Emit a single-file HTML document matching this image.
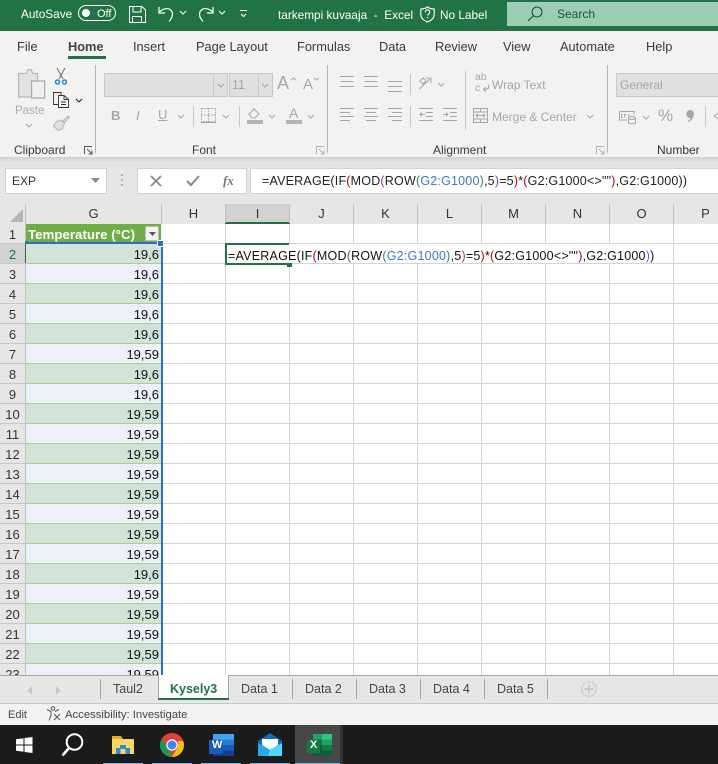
<!DOCTYPE html>
<html><head><meta charset="utf-8"><style>
html,body{margin:0;padding:0}
body{width:718px;height:764px;overflow:hidden;position:relative;background:#fff;font-family:"Liberation Sans",sans-serif}
div,span.a{position:absolute}
svg{position:absolute;overflow:visible}
.t{position:absolute;white-space:nowrap;line-height:16px;height:16px}
.w{color:#fff;font-size:11.8px}
.tab{font-size:12.8px;color:#3b3a39;top:39px}
.d{color:#a6a6a6;font-size:12px}
.lbl{font-size:12px;color:#3b3a39;top:142px}
.ch{top:204px;height:20px;line-height:20px;text-align:center;font-size:13px;color:#333;background:#e6e6e6}
.rn{left:0;width:25px;height:19px;line-height:21px;text-align:center;font-size:13px;color:#333;background:#e6e6e6}
.v{left:26px;width:133px;height:19px;line-height:21px;text-align:right;font-size:13px;color:#111;padding-right:2px;white-space:nowrap}
.a1{background:#d4e3d8}.a2{background:#ebf0f9}
.hl{left:26px;width:135px;height:1px;background:#a9d08e}
.gl{left:162px;width:556px;height:1px;background:#d4d4d4}
.vl{top:224px;width:1px;height:451px;background:#d4d4d4}
.sh{top:681px;font-size:12.5px;color:#444}
.sep{top:679px;width:1px;height:20px;background:#a6a6a6}
.r{color:#c00000}.p{color:#7f3f98}.g{color:#2e8b57}.b{color:#3f78c8}
</style></head><body>

<!-- title bar -->
<div style="left:0;top:0;width:718px;height:31px;background:#217346"></div>
<div style="left:507px;top:2px;width:211px;height:24px;background:#9fcdb3"></div>
<span class="t w" style="left:21px;top:6px;font-size:11.8px">AutoSave</span>
<div style="left:78px;top:5px;width:36px;height:14px;border:1px solid #fff;border-radius:8px"></div>
<div style="left:82px;top:9px;width:8px;height:8px;background:#fff;border-radius:50%"></div>
<span class="t w" style="left:97px;top:6px;font-size:11px">Off</span>
<svg style="left:129px;top:6px" width="17" height="17" fill="none" stroke="#fff" stroke-width="1"><path d="M.5.5H13l3.5 3.5v12.500H.5zM4 .5v5.500h8V.5M3.500 16.500V10.500h9v6"/></svg>
<svg style="left:158px;top:6px" width="17" height="18" fill="none" stroke="#fff" stroke-width="1.200"><path d="M1 1v6h6M1 6.500C4 3 9 1.500 12 3.500c3.500 2.500 3.500 7-1 12"/></svg>
<svg style="left:179px;top:10px" width="8" height="5" fill="none" stroke="#fff"><path d="M1 1l3 3 3-3"/></svg>
<svg style="left:197px;top:6px" width="17" height="18" fill="none" stroke="#fff" stroke-width="1.200"><path d="M16 1v6h-6M16 6.500C13 3 8 1.500 5 3.500c-3.500 2.500-3.500 7 1 12"/></svg>
<svg style="left:218px;top:10px" width="8" height="5" fill="none" stroke="#fff"><path d="M1 1l3 3 3-3"/></svg>
<svg style="left:240px;top:10px" width="8" height="8" fill="none" stroke="#fff"><path d="M0 .5h7M1 4l2.500 2.500L6 4"/></svg>
<span class="t w" style="left:278px;top:7px">tarkempi kuvaaja&nbsp; -&nbsp; Excel</span>
<svg style="left:420px;top:6px" width="15" height="17" fill="none" stroke="#fff" stroke-width="1.100"><path d="M7.500.8C6 2.300 3 3 .8 3v5.500c0 3.500 3 6 6.700 7.500 3.700-1.500 6.700-4 6.700-7.500V3C12 3 9 2.300 7.500.8z"/><path d="M5.300 6.200c0-3 4.500-3 4.500 0 0 1.500-2.200 1.700-2.200 3.300M7.600 11v1.200"/></svg>
<span class="t w" style="left:440px;top:7px">No Label</span>
<svg style="left:527px;top:6px" width="16" height="16" fill="none" stroke="#17553a" stroke-width="1.100"><circle cx="10" cy="6" r="5"/><path d="M6.300 9.700L1 15"/></svg>
<span class="t" style="left:557px;top:6px;font-size:12px;color:#17553a">Search</span>

<!-- ribbon -->
<div style="left:0;top:31px;width:718px;height:126px;background:#f3f2f1"></div>
<div style="left:0;top:157px;width:718px;height:47px;background:#e6e6e6"></div>
<div style="left:0;top:157px;width:718px;height:5px;background:linear-gradient(#cfcfcf,#e6e6e6)"></div>
<span class="t tab" style="left:17px">File</span>
<span class="t tab" style="left:68px;font-weight:bold;color:#444;font-size:12.800px">Home</span>
<div style="left:68px;top:56px;width:38px;height:3px;background:#217346"></div>
<span class="t tab" style="left:133px">Insert</span>
<span class="t tab" style="left:196px">Page Layout</span>
<span class="t tab" style="left:297px">Formulas</span>
<span class="t tab" style="left:379px">Data</span>
<span class="t tab" style="left:435px">Review</span>
<span class="t tab" style="left:503px">View</span>
<span class="t tab" style="left:560px">Automate</span>
<span class="t tab" style="left:646px">Help</span>

<!-- group separators -->
<div style="left:95px;top:65px;width:1px;height:88px;background:#b5b5b5"></div>
<div style="left:327px;top:65px;width:1px;height:88px;background:#b5b5b5"></div>
<div style="left:607px;top:65px;width:1px;height:88px;background:#b5b5b5"></div>

<!-- clipboard -->
<svg style="left:18px;top:69px" width="28" height="31" fill="#e3e3e3" stroke="#b8b8b8" stroke-width="1.200"><path d="M.6 4.500H8L10 .6h3l2 3.900h4.500V28H.6z"/><rect x="13.600" y="12" width="13" height="17" fill="#f0f0f0" stroke="#a8a8a8"/></svg>
<span class="t d" style="left:15px;top:103px;font-size:11.500px;color:#adadad">Paste</span>
<svg style="left:25px;top:123px" width="8" height="5" fill="none" stroke="#a6a6a6"><path d="M1 1l3 3 3-3"/></svg>
<svg style="left:55px;top:68px" width="12" height="17" fill="none" stroke="#666" stroke-width=".9"><path d="M2 0l6 11M10 0L4 11"/><circle cx="2.500" cy="14" r="2" stroke="#2b88d8" stroke-width="1.500"/><circle cx="9.500" cy="14" r="2" stroke="#2b88d8" stroke-width="1.500"/></svg>
<svg style="left:53px;top:92px" width="17" height="16" fill="#f3f2f1" stroke="#333" stroke-width=".9"><path d="M.5.500H8v12H.5z"/><path d="M5.500 3.500H11l4.500 4v8h-10z"/><path d="M11 3.500v4h4.500M8 10h5M8 12.500h5" fill="none"/></svg>
<svg style="left:75px;top:98px" width="8" height="5" fill="none" stroke="#222"><path d="M1 1l3 3 3-3"/></svg>
<svg style="left:53px;top:115px" width="17" height="16" fill="#e0e0e0" stroke="#b5b5b5"><path d="M10 6l5-5 1.500 1.500-5 5zM3 7l5-2 3.500 3.500L9 14l-4 1.500L.5 11z"/></svg>
<span class="t lbl" style="left:14px">Clipboard</span>
<svg style="left:84px;top:146px" width="9" height="9" fill="none" stroke="#555"><path d="M.5 8V.5H8M3 3l5 5M8 4.500V8H4.500"/></svg>

<!-- font -->
<div style="left:104px;top:73px;width:122px;height:22px;background:#e1e0df;border:1px solid #c8c8c8"></div>
<div style="left:213px;top:74px;width:1px;height:22px;background:#c8c8c8"></div>
<svg style="left:217px;top:83px" width="8" height="5" fill="none" stroke="#a6a6a6"><path d="M1 1l3 3 3-3"/></svg>
<div style="left:229px;top:73px;width:42px;height:22px;background:#e1e0df;border:1px solid #c8c8c8"></div>
<div style="left:258px;top:74px;width:1px;height:22px;background:#c8c8c8"></div>
<svg style="left:261px;top:83px" width="8" height="5" fill="none" stroke="#a6a6a6"><path d="M1 1l3 3 3-3"/></svg>
<span class="t d" style="left:232px;top:77px;font-size:12.500px">11</span>
<span class="t" style="left:277px;top:75px;font-size:18px;color:#a6a6a6">A</span>
<svg style="left:290px;top:77px" width="7" height="4" fill="none" stroke="#a6a6a6"><path d="M1 3l2.500-2L6 3"/></svg>
<span class="t" style="left:303px;top:77px;font-size:15px;color:#a6a6a6">A</span>
<svg style="left:313px;top:77px" width="7" height="4" fill="none" stroke="#a6a6a6"><path d="M1 1l2.500 2L6 1"/></svg>
<span class="t" style="left:111px;top:108px;font-size:13px;font-weight:bold;color:#a6a6a6">B</span>
<span class="t" style="left:136px;top:108px;font-size:13px;font-style:italic;color:#a6a6a6">I</span>
<span class="t" style="left:158px;top:107px;font-size:13px;color:#a6a6a6;text-decoration:underline">U</span>
<svg style="left:177px;top:114px" width="8" height="5" fill="none" stroke="#a6a6a6"><path d="M1 1l3 3 3-3"/></svg>
<div style="left:193px;top:106px;width:1px;height:21px;background:#c8c8c8"></div>
<svg style="left:201px;top:108px" width="15" height="15" fill="none" stroke="#a6a6a6" stroke-dasharray="1.500 1"><rect x=".5" y=".5" width="14" height="13"/><path d="M7.500 0v14M0 7h15"/><path d="M0 14.500h15" stroke-dasharray="none"/></svg>
<svg style="left:222px;top:114px" width="8" height="5" fill="none" stroke="#a6a6a6"><path d="M1 1l3 3 3-3"/></svg>
<div style="left:239px;top:106px;width:1px;height:21px;background:#c8c8c8"></div>
<svg style="left:248px;top:108px" width="14" height="12" fill="none" stroke="#a6a6a6"><path d="M1 6l5-5 5 5-4 4H4zM6 1V0"/></svg>
<div style="left:247px;top:120px;width:16px;height:4px;background:#b3b3b3"></div>
<svg style="left:268px;top:114px" width="8" height="5" fill="none" stroke="#a6a6a6"><path d="M1 1l3 3 3-3"/></svg>
<span class="t" style="left:289px;top:105px;font-size:14px;color:#a6a6a6">A</span>
<div style="left:286px;top:120px;width:16px;height:4px;background:#b3b3b3"></div>
<svg style="left:307px;top:114px" width="8" height="5" fill="none" stroke="#a6a6a6"><path d="M1 1l3 3 3-3"/></svg>
<span class="t lbl" style="left:192px">Font</span>
<svg style="left:316px;top:146px" width="9" height="9" fill="none" stroke="#b5b5b5"><path d="M.5 8V.5H8M3 3l5 5M8 4.500V8H4.500"/></svg>

<!-- alignment -->
<svg style="left:340px;top:76px" width="48" height="17" stroke="#a6a6a6"><path d="M0 .5h14M1 5.500h12M0 10.500h14M24 .5h14M25 5.500h12M24 10.500h14"/></svg>
<svg style="left:388px;top:81px" width="14" height="12" stroke="#a6a6a6"><path d="M0 .5h14M0 5.500h14M0 10.500h14"/></svg>
<div style="left:410px;top:74px;width:1px;height:21px;background:#c8c8c8"></div>
<svg style="left:418px;top:76px" width="18" height="15" fill="none" stroke="#a6a6a6"><path d="M1 13L12 3M8 2h5v5M2 5l3-3 3 3-3 3z"/></svg>
<svg style="left:437px;top:82px" width="8" height="5" fill="none" stroke="#a6a6a6"><path d="M1 1l3 3 3-3"/></svg>
<div style="left:465px;top:71px;width:1px;height:59px;background:#c8c8c8"></div>
<span class="t d" style="left:475px;top:72px;font-size:10.500px;line-height:10px">ab</span>
<span class="t d" style="left:475px;top:83px;font-size:10.500px;line-height:10px">c</span>
<svg style="left:481px;top:84px" width="9" height="9" fill="none" stroke="#a6a6a6"><path d="M7 .5c2 3 0 5-4 5M5 3L2.500 5.500 5 8"/></svg>
<span class="t d" style="left:492px;top:77px;font-size:12px">Wrap Text</span>
<svg style="left:340px;top:108px" width="14" height="14" stroke="#a6a6a6"><path d="M0 .5h14M0 4.500h10M0 8.500h14M0 12.500h10"/></svg>
<svg style="left:364px;top:108px" width="14" height="14" stroke="#a6a6a6"><path d="M0 .5h14M2 4.500h10M0 8.500h14M2 12.500h10"/></svg>
<svg style="left:388px;top:108px" width="14" height="14" stroke="#a6a6a6"><path d="M0 .5h14M4 4.500h10M0 8.500h14M4 12.500h10"/></svg>
<div style="left:410px;top:106px;width:1px;height:21px;background:#c8c8c8"></div>
<svg style="left:419px;top:108px" width="15" height="14" fill="none" stroke="#a6a6a6"><path d="M0 .5h14M7 4.500h7M7 8.500h7M0 12.500h14M6 6.500H1M3 4.500l-2 2 2 2"/></svg>
<svg style="left:443px;top:108px" width="15" height="14" fill="none" stroke="#a6a6a6"><path d="M0 .5h14M7 4.500h7M7 8.500h7M0 12.500h14M0 6.500h5M3 4.500l2 2-2 2"/></svg>
<svg style="left:473px;top:108px" width="15" height="15" fill="none" stroke="#a6a6a6"><rect x=".5" y=".5" width="14" height="14"/><path d="M0 4h15M0 11h15M7.500 0v4M7.500 11v4M3 7.500h9M5 5.500l-2 2 2 2M10 5.500l2 2-2 2"/></svg>
<span class="t d" style="left:492px;top:109px;font-size:12px">Merge &amp; Center</span>
<svg style="left:586px;top:114px" width="8" height="5" fill="none" stroke="#a6a6a6"><path d="M1 1l3 3 3-3"/></svg>
<span class="t lbl" style="left:433px">Alignment</span>
<svg style="left:596px;top:146px" width="9" height="9" fill="none" stroke="#b5b5b5"><path d="M.5 8V.5H8M3 3l5 5M8 4.500V8H4.500"/></svg>

<!-- number -->
<div style="left:616px;top:73px;width:102px;height:22px;background:#e1e0df;border:1px solid #c8c8c8;border-right:0"></div>
<span class="t d" style="left:620px;top:77px;font-size:12px">General</span>
<svg style="left:619px;top:111px" width="17" height="13" fill="none" stroke="#a6a6a6"><path d="M.5.500H15v3M.5.500V9H8"/><path d="M4 3.500H2.500v3H4M7 3.500H5.500v3M10 3.500v3"/><ellipse cx="13" cy="7" rx="3.500" ry="1.500"/><path d="M9.500 7v5c1 1 6 1 7 0V7"/></svg>
<svg style="left:642px;top:115px" width="8" height="5" fill="none" stroke="#a6a6a6"><path d="M1 1l3 3 3-3"/></svg>
<span class="t" style="left:658px;top:108px;font-size:17px;color:#a6a6a6">%</span>
<svg style="left:686px;top:110px" width="8" height="12" fill="#a6a6a6"><path d="M4 0a4 4 0 0 1 4 4c0 3.500-2.500 6.500-5.500 8L2 11c1.500-1 2.500-2.500 2.700-3A4 4 0 1 1 4 0z"/></svg>
<div style="left:705px;top:106px;width:1px;height:21px;background:#c8c8c8"></div>
<svg style="left:713px;top:108px" width="5" height="14" fill="none" stroke="#a6a6a6"><path d="M5 5L1 8l4 3"/></svg>
<span class="t lbl" style="left:657px;color:#333">Number</span>

<!-- name box + formula bar -->
<div style="left:5px;top:168px;width:100px;height:24px;background:#fff;border:1px solid #d2d2d2"></div>
<span class="t" style="left:12px;top:173px;font-size:12px;color:#333">EXP</span>
<svg style="left:91px;top:178px" width="9" height="5" fill="#8a8a8a"><path d="M0 0h9L4.500 5z"/></svg>
<svg style="left:121px;top:174px" width="3" height="15" fill="#b4b4b4"><rect y="0" width="2" height="2"/><rect y="5" width="2" height="2"/><rect y="10" width="2" height="2"/></svg>
<div style="left:137px;top:168px;width:108px;height:24px;background:#fff;border:1px solid #d2d2d2"></div>
<svg style="left:150px;top:175px" width="12" height="12" fill="none" stroke="#8a8a8a" stroke-width="1.800"><path d="M1 1l10 10M11 1L1 11"/></svg>
<svg style="left:186px;top:175px" width="14" height="12" fill="none" stroke="#8a8a8a" stroke-width="2"><path d="M1 6l4 4L13 1"/></svg>
<span class="t" style="left:223px;top:173px;font-size:13px;font-style:italic;font-weight:bold;color:#777;font-family:'Liberation Serif',serif">fx</span>
<div style="left:250px;top:168px;width:468px;height:24px;background:#fff;border:1px solid #d2d2d2;border-right:0"></div>
<span class="t" style="left:262px;top:173px;font-size:12.500px;color:#222;letter-spacing:.2px">=AVERAGE(IF<span class="r">(</span>MOD<span class="p">(</span>ROW<span class="g">(</span><span class="b">G2:G1000</span><span class="g">)</span>,5<span class="p">)</span>=5<span class="r">)</span>*<span class="r">(</span>G2:G1000&lt;&gt;""<span class="r">)</span>,G2:G1000))</span>

<!-- column headers -->
<div class="ch" style="left:0;width:25px"></div>
<svg style="left:10px;top:209px" width="13" height="13" fill="#b5b5b5"><path d="M13 0v13H0z"/></svg>
<div class="ch" style="left:26px;width:135px;line-height:20px">G</div>
<div class="ch" style="left:162px;width:63px">H</div>
<div class="ch" style="left:226px;width:63px;background:#d2d2d2;height:18px;line-height:19px">I</div>
<div style="left:225px;top:222px;width:65px;height:2px;background:#217346"></div>
<div class="ch" style="left:290px;width:63px">J</div>
<div class="ch" style="left:354px;width:63px">K</div>
<div class="ch" style="left:418px;width:63px">L</div>
<div class="ch" style="left:482px;width:63px">M</div>
<div class="ch" style="left:546px;width:63px">N</div>
<div class="ch" style="left:610px;width:63px">O</div>
<div class="ch" style="left:674px;width:63px">P</div>
<div style="left:25px;top:204px;width:1px;height:20px;background:#c0c0c0"></div>
<div style="left:161px;top:204px;width:1px;height:20px;background:#c0c0c0"></div>
<div style="left:225px;top:204px;width:1px;height:19px;background:#c0c0c0"></div>
<div style="left:289px;top:204px;width:1px;height:19px;background:#c0c0c0"></div>
<div style="left:353px;top:204px;width:1px;height:20px;background:#c0c0c0"></div>
<div style="left:417px;top:204px;width:1px;height:20px;background:#c0c0c0"></div>
<div style="left:481px;top:204px;width:1px;height:20px;background:#c0c0c0"></div>
<div style="left:545px;top:204px;width:1px;height:20px;background:#c0c0c0"></div>
<div style="left:609px;top:204px;width:1px;height:20px;background:#c0c0c0"></div>
<div style="left:673px;top:204px;width:1px;height:20px;background:#c0c0c0"></div>

<!-- grid lines -->
<div class="vl" style="left:225px"></div><div class="vl" style="left:289px"></div><div class="vl" style="left:353px"></div><div class="vl" style="left:417px"></div><div class="vl" style="left:481px"></div><div class="vl" style="left:545px"></div><div class="vl" style="left:609px"></div><div class="vl" style="left:673px"></div>
<div class="gl" style="top:243px"></div><div class="gl" style="top:263px"></div><div class="gl" style="top:283px"></div><div class="gl" style="top:303px"></div><div class="gl" style="top:323px"></div><div class="gl" style="top:343px"></div><div class="gl" style="top:363px"></div><div class="gl" style="top:383px"></div><div class="gl" style="top:403px"></div><div class="gl" style="top:423px"></div><div class="gl" style="top:443px"></div><div class="gl" style="top:463px"></div><div class="gl" style="top:483px"></div><div class="gl" style="top:503px"></div><div class="gl" style="top:523px"></div><div class="gl" style="top:543px"></div><div class="gl" style="top:563px"></div><div class="gl" style="top:583px"></div><div class="gl" style="top:603px"></div><div class="gl" style="top:623px"></div><div class="gl" style="top:643px"></div><div class="gl" style="top:663px"></div>
<div style="left:25px;top:224px;width:1px;height:451px;background:#c0c0c0"></div>

<!-- row numbers -->
<div class="rn" style="top:224px">1</div>
<div class="rn" style="top:244px;background:#d2d2d2;color:#217346">2</div>
<div class="rn" style="top:264px">3</div><div class="rn" style="top:284px">4</div><div class="rn" style="top:304px">5</div><div class="rn" style="top:324px">6</div><div class="rn" style="top:344px">7</div><div class="rn" style="top:364px">8</div><div class="rn" style="top:384px">9</div><div class="rn" style="top:404px">10</div><div class="rn" style="top:424px">11</div><div class="rn" style="top:444px">12</div><div class="rn" style="top:464px">13</div><div class="rn" style="top:484px">14</div><div class="rn" style="top:504px">15</div><div class="rn" style="top:524px">16</div><div class="rn" style="top:544px">17</div><div class="rn" style="top:564px">18</div><div class="rn" style="top:584px">19</div><div class="rn" style="top:604px">20</div><div class="rn" style="top:624px">21</div><div class="rn" style="top:644px">22</div><div class="rn" style="top:664px;height:11px;overflow:hidden">23</div>
<div style="left:0;top:243px;width:25px;height:432px;background:repeating-linear-gradient(#c8c8c8 0 1px,transparent 1px 20px)"></div>
<div style="left:25px;top:244px;width:2px;height:19px;background:#217346"></div>

<!-- column G -->
<div style="left:26px;top:224px;width:135px;height:19px;background:#70ad47"></div>
<span class="t" style="left:28px;top:227px;font-size:13.300px;font-weight:bold;color:#fff">Temperature (°C)</span>
<div style="left:145px;top:226px;width:14px;height:15px;background:#f2f2f2;border:1px solid #bbb;box-sizing:border-box"></div>
<svg style="left:149px;top:232px" width="7" height="4" fill="#555"><path d="M0 0h7L3.500 4z"/></svg>
<div class="v a1" style="top:244px">19,6</div><div class="hl" style="top:263px"></div>
<div class="v a2" style="top:264px">19,6</div><div class="hl" style="top:283px"></div>
<div class="v a1" style="top:284px">19,6</div><div class="hl" style="top:303px"></div>
<div class="v a2" style="top:304px">19,6</div><div class="hl" style="top:323px"></div>
<div class="v a1" style="top:324px">19,6</div><div class="hl" style="top:343px"></div>
<div class="v a2" style="top:344px">19,59</div><div class="hl" style="top:363px"></div>
<div class="v a1" style="top:364px">19,6</div><div class="hl" style="top:383px"></div>
<div class="v a2" style="top:384px">19,6</div><div class="hl" style="top:403px"></div>
<div class="v a1" style="top:404px">19,59</div><div class="hl" style="top:423px"></div>
<div class="v a2" style="top:424px">19,59</div><div class="hl" style="top:443px"></div>
<div class="v a1" style="top:444px">19,59</div><div class="hl" style="top:463px"></div>
<div class="v a2" style="top:464px">19,59</div><div class="hl" style="top:483px"></div>
<div class="v a1" style="top:484px">19,59</div><div class="hl" style="top:503px"></div>
<div class="v a2" style="top:504px">19,59</div><div class="hl" style="top:523px"></div>
<div class="v a1" style="top:524px">19,59</div><div class="hl" style="top:543px"></div>
<div class="v a2" style="top:544px">19,59</div><div class="hl" style="top:563px"></div>
<div class="v a1" style="top:564px">19,6</div><div class="hl" style="top:583px"></div>
<div class="v a2" style="top:584px">19,59</div><div class="hl" style="top:603px"></div>
<div class="v a1" style="top:604px">19,59</div><div class="hl" style="top:623px"></div>
<div class="v a2" style="top:624px">19,59</div><div class="hl" style="top:643px"></div>
<div class="v a1" style="top:644px">19,59</div><div class="hl" style="top:663px"></div>
<div class="v a2" style="top:664px;height:11px;overflow:hidden">19,59</div>
<!-- range selection -->
<div style="left:26px;top:242px;width:135px;height:2px;background:#2e6fc4"></div>
<div style="left:161px;top:242px;width:2px;height:433px;background:#2e6fc4"></div>
<div style="left:157px;top:240px;width:5px;height:5px;background:#2e6fc4;border:.5px solid #fff"></div>
<div style="left:25px;top:241px;width:3px;height:3px;background:#2e6fc4"></div>

<!-- I2 edit cell -->
<div style="left:226px;top:244px;width:428px;height:19px;background:#fff"></div>
<div style="left:225px;top:243px;width:64px;height:2px;background:#217346"></div>
<div style="left:225px;top:243px;width:2px;height:21px;background:#217346"></div>
<div style="left:225px;top:263px;width:62px;height:2px;background:#217346"></div>
<div style="left:287px;top:263px;width:5px;height:4px;background:#217346"></div>
<span class="t" style="left:228px;top:248px;font-size:12.500px;color:#111;letter-spacing:.22px">=AVERAGE(IF<span class="r">(</span>MOD<span class="p">(</span>ROW<span class="g">(</span><span class="b">G2:G1000</span><span class="g">)</span>,5<span class="p">)</span>=5<span class="r">)</span>*<span class="r">(</span>G2:G1000&lt;&gt;""<span class="r">)</span>,G2:G1000<span class="b">)</span>)</span>

<!-- sheet tabs -->
<div style="left:0;top:675px;width:718px;height:28px;background:#e6e6e6"></div>
<div style="left:0;top:675px;width:718px;height:1px;background:#a6a6a6"></div>
<div style="left:0;top:703px;width:718px;height:1px;background:#c8c8c8"></div>
<svg style="left:27px;top:686px" width="5" height="9" fill="#c8c8c8"><path d="M5 0v9L0 4.500z"/></svg>
<svg style="left:56px;top:686px" width="5" height="9" fill="#c8c8c8"><path d="M0 0v9l5-4.500z"/></svg>
<div class="sep" style="left:100px"></div>
<span class="t sh" style="left:113px">Taul2</span>
<div style="left:158px;top:675px;width:71px;height:24px;background:#fff;border-left:1px solid #a6a6a6;border-right:1px solid #a6a6a6;box-sizing:border-box"></div>
<div style="left:158px;top:698px;width:71px;height:2px;background:#217346"></div>
<span class="t sh" style="left:170px;font-weight:bold;color:#217346">Kysely3</span>
<span class="t sh" style="left:241px">Data 1</span>
<div class="sep" style="left:292px"></div>
<span class="t sh" style="left:305px">Data 2</span>
<div class="sep" style="left:356px"></div>
<span class="t sh" style="left:369px">Data 3</span>
<div class="sep" style="left:420px"></div>
<span class="t sh" style="left:433px">Data 4</span>
<div class="sep" style="left:484px"></div>
<span class="t sh" style="left:497px">Data 5</span>
<div class="sep" style="left:547px"></div>
<svg style="left:581px;top:681px" width="16" height="16" fill="none" stroke="#c8c8c8"><circle cx="8" cy="8" r="7.300"/><path d="M8 3.500v9M3.500 8h9" stroke-width="2"/></svg>

<!-- status bar -->
<div style="left:0;top:704px;width:718px;height:21px;background:#f3f2f1"></div>
<span class="t" style="left:8px;top:707px;font-size:11px;color:#444">Edit</span>
<svg style="left:46px;top:706px" width="16" height="16" fill="none" stroke="#555" stroke-width="1"><circle cx="7" cy="2.500" r="1.800"/><path d="M1 3.500l4 2v4l-2 5M13 3.500l-4 2M8 8l6 6M14 8l-6 6"/></svg>
<span class="t" style="left:65px;top:707px;font-size:11.300px;color:#444">Accessibility: Investigate</span>

<!-- taskbar -->
<div style="left:0;top:725px;width:718px;height:39px;background:#1b1b1b"></div>
<div style="left:295px;top:725px;width:45px;height:39px;background:#474747"></div>
<div style="left:340px;top:725px;width:3px;height:39px;background:#333"></div>
<svg style="left:16px;top:737px" width="17" height="16" fill="#fff"><path d="M0 2.300L7.500 1.200V7.500H0zM8.500 1L16.500 0V7.500H8.500zM0 8.500H7.500V14.800L0 13.700zM8.500 8.500H16.500V16L8.500 15z"/></svg>
<svg style="left:61px;top:733px" width="23" height="24" fill="none" stroke="#fff" stroke-width="2"><circle cx="13.500" cy="9" r="7.800"/><path d="M8 15L1.500 22.500" stroke-width="2.500"/></svg>
<svg style="left:112px;top:735px" width="22" height="20"><path d="M0 1h9l2 3h11v5H0z" fill="#e8a92b"/><rect y="4" width="22" height="15" fill="#fbd566"/><path d="M4 19v-6h4v-3h6v3h4v6z" fill="#2b8fd8"/><rect x="8.500" y="14" width="5" height="5" fill="#fbd566"/></svg>
<svg style="left:160px;top:733px" width="24" height="24"><circle cx="12" cy="12" r="12" fill="#db4437"/><path d="M12 24C5.400 24 0 18.600 0 12c0-2.300.6-4.300 1.700-6.100L7.500 16l4.500 8z" fill="#0f9d58"/><path d="M12 24l5.800-10 .2-6h5c.7 1.300 1 2.600 1 4 0 6.600-5.400 12-12 12z" fill="#f4c20d"/><circle cx="12" cy="12" r="5.700" fill="#fff"/><circle cx="12" cy="12" r="4.500" fill="#4285f4"/></svg>
<svg style="left:209px;top:734px" width="25" height="23"><rect x="4" y="0" width="21" height="5.500" fill="#41a5ee"/><rect x="4" y="5.500" width="21" height="5.500" fill="#2b7cd3"/><rect x="4" y="11" width="21" height="5.500" fill="#185abd"/><rect x="4" y="16.500" width="21" height="5.500" fill="#103f91"/><rect x="0" y="6" width="14" height="14" fill="#1a5cb8"/></svg>
<span class="t" style="left:212px;top:737px;color:#fff;font-size:11px;font-weight:bold">W</span>
<svg style="left:258px;top:733px" width="24" height="24"><path d="M12 0L0 8v15h24V8z" fill="#0f6cbd"/><path d="M4 6h16v6l-8 5-8-5z" fill="#fff"/><path d="M0 10l12 7 12-7v13H0z" fill="#28a8ea"/><path d="M12 17l12-7v13H10z" fill="#50d9ff"/></svg>
<svg style="left:307px;top:734px" width="25" height="23"><rect x="6" y="0" width="19" height="22" rx="1" fill="#185c37"/><rect x="15" y="0" width="10" height="5.500" fill="#33c481"/><rect x="6" y="0" width="9" height="5.500" fill="#21a366"/><rect x="15" y="5.500" width="10" height="5.500" fill="#21a366"/><rect x="6" y="5.500" width="9" height="5.500" fill="#107c41"/><rect x="15" y="11" width="10" height="5.500" fill="#107c41"/><rect x="0" y="6" width="13" height="13" fill="#107c41"/></svg>
<span class="t" style="left:310px;top:737px;color:#fff;font-size:11px;font-weight:bold">X</span>
<div style="left:103px;top:763px;width:40px;height:1px;background:#76b9ed"></div>
<div style="left:152px;top:763px;width:40px;height:1px;background:#76b9ed"></div>
<div style="left:201px;top:763px;width:40px;height:1px;background:#76b9ed"></div>
<div style="left:250px;top:763px;width:40px;height:1px;background:#76b9ed"></div>
<div style="left:295px;top:763px;width:45px;height:1px;background:#76b9ed"></div>
</body></html>
